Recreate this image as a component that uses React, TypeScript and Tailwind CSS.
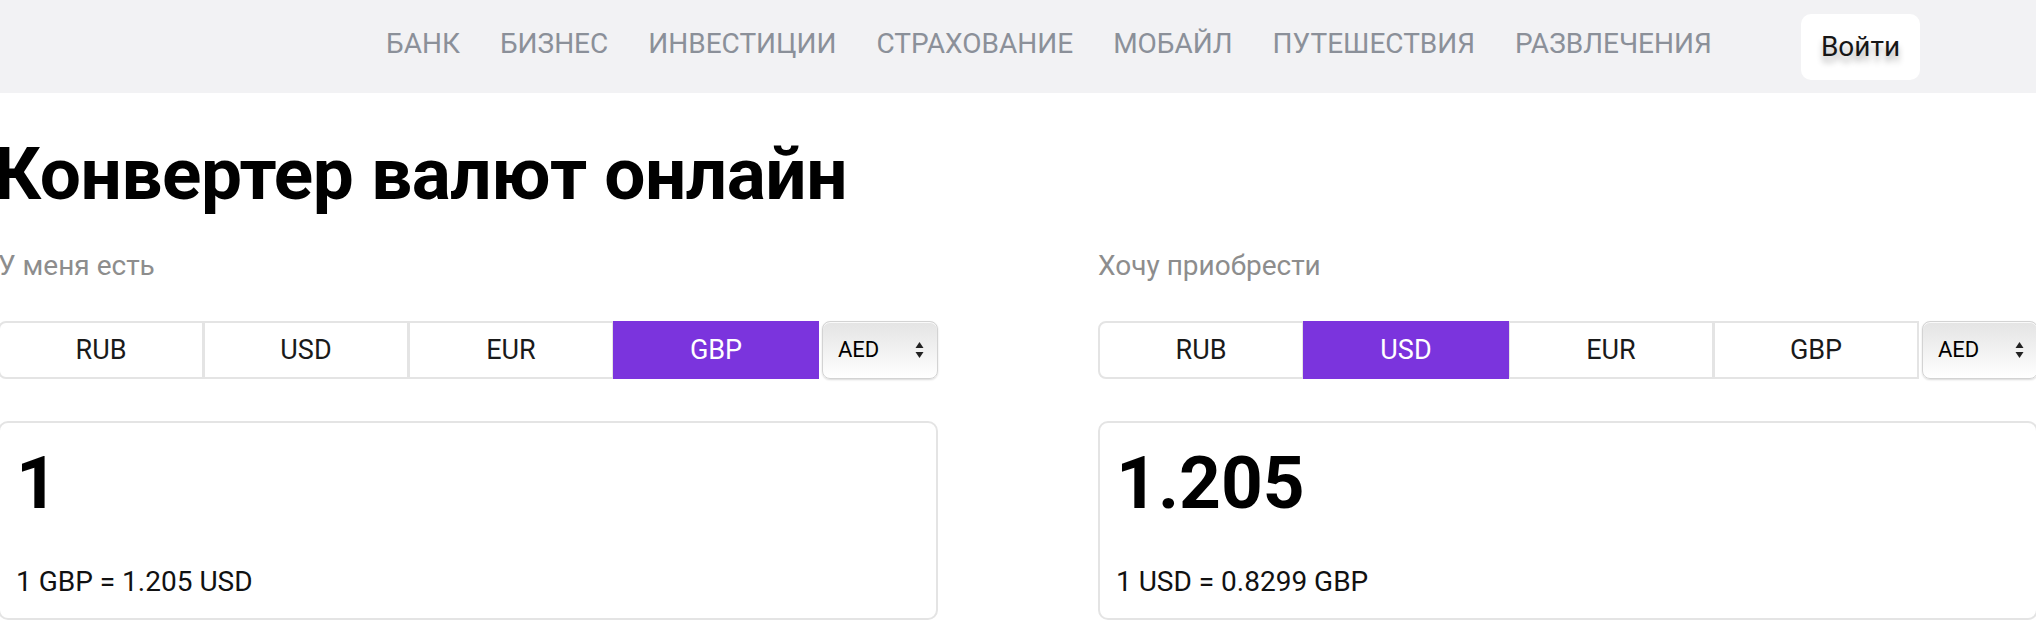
import React from "react";

const NAV = ["Банк", "Бизнес", "Инвестиции", "Страхование", "Мобайл", "Путешествия", "Развлечения"];
const CURRENCIES = ["RUB", "USD", "EUR", "GBP"];

function Segmented({ active }: { active: string }) {
  return (
    <div className="flex h-[58px]">
      {CURRENCIES.map((c, i) => (
        <button
          key={c}
          className={
            "relative flex w-[206px] items-center justify-center border-2 text-[27px] leading-none " +
            (i > 0 ? "-ml-px " : "rounded-l-[8px] ") +
            (c === active
              ? "z-10 border-[#7b34dd] bg-[#7b34dd] text-white"
              : "border-[#e4e4e4] bg-white text-[#1a1a1a]")
          }
        >
          {c}
        </button>
      ))}
      {/* native-looking select */}
      <div className="ml-[3px] flex w-[116px] items-center justify-between rounded-[8px] border border-[#d3d3d3] bg-gradient-to-b from-[#e4e4e4] to-white pl-[15px] pr-[13px] shadow-[inset_0_1px_0_rgba(255,255,255,0.8),0_1px_2px_rgba(0,0,0,0.15)]">
        <span className="text-[22px] leading-none text-black">AED</span>
        <svg width="9" height="20" viewBox="0 0 9 20" aria-hidden="true">
          <path d="M4.5 2 L8.5 8 L0.5 8 Z" fill="#222" />
          <path d="M4.5 18 L8.5 12 L0.5 12 Z" fill="#222" />
        </svg>
      </div>
    </div>
  );
}

function Column({
  label,
  active,
  amount,
  rate,
}: {
  label: string;
  active: string;
  amount: string;
  rate: string;
}) {
  return (
    <div className="flex w-[940px] shrink-0 flex-col">
      <div className="text-[28px] leading-none text-[#8d8d8d]">{label}</div>
      <div className="mt-[41px]">
        <Segmented active={active} />
      </div>
      <div className="mt-[42px] flex h-[199px] flex-col rounded-[10px] border-2 border-[#e4e4e4] bg-white pl-[16px] pt-[24px]">
        <div className="text-[73px] font-bold leading-none text-black">{amount}</div>
        <div className="mt-[48px] text-[28px] leading-none text-[#111]">{rate}</div>
      </div>
    </div>
  );
}

export default function App() {
  return (
    <div className="h-[620px] w-[2036px] overflow-hidden bg-white font-['Roboto',sans-serif]">
      <header className="flex h-[93px] items-center bg-[#f2f2f4]">
        <nav className="flex gap-[40px] pb-[6px] pl-[386px]">
          {NAV.map((n) => (
            <a key={n} className="text-[28px] uppercase leading-none text-[#8b9099]">
              {n}
            </a>
          ))}
        </nav>
        <button className="ml-auto mr-[116px] flex h-[66px] w-[119px] items-center justify-center rounded-[10px] bg-white text-[28px] text-[#161616] [text-shadow:0_6px_6px_rgba(0,0,0,0.3)]">
          Войти
        </button>
      </header>

      <main className="-ml-[2px]">
        <h1 className="mt-[45px] -ml-[4px] text-[73px] font-bold leading-none tracking-[-0.5px] text-black">
          Конвертер валют онлайн
        </h1>
        <div className="mt-[41px] flex gap-[160px]">
          <Column label="У меня есть" active="GBP" amount="1" rate="1 GBP = 1.205 USD" />
          <Column label="Хочу приобрести" active="USD" amount="1.205" rate="1 USD = 0.8299 GBP" />
        </div>
      </main>
    </div>
  );
}
